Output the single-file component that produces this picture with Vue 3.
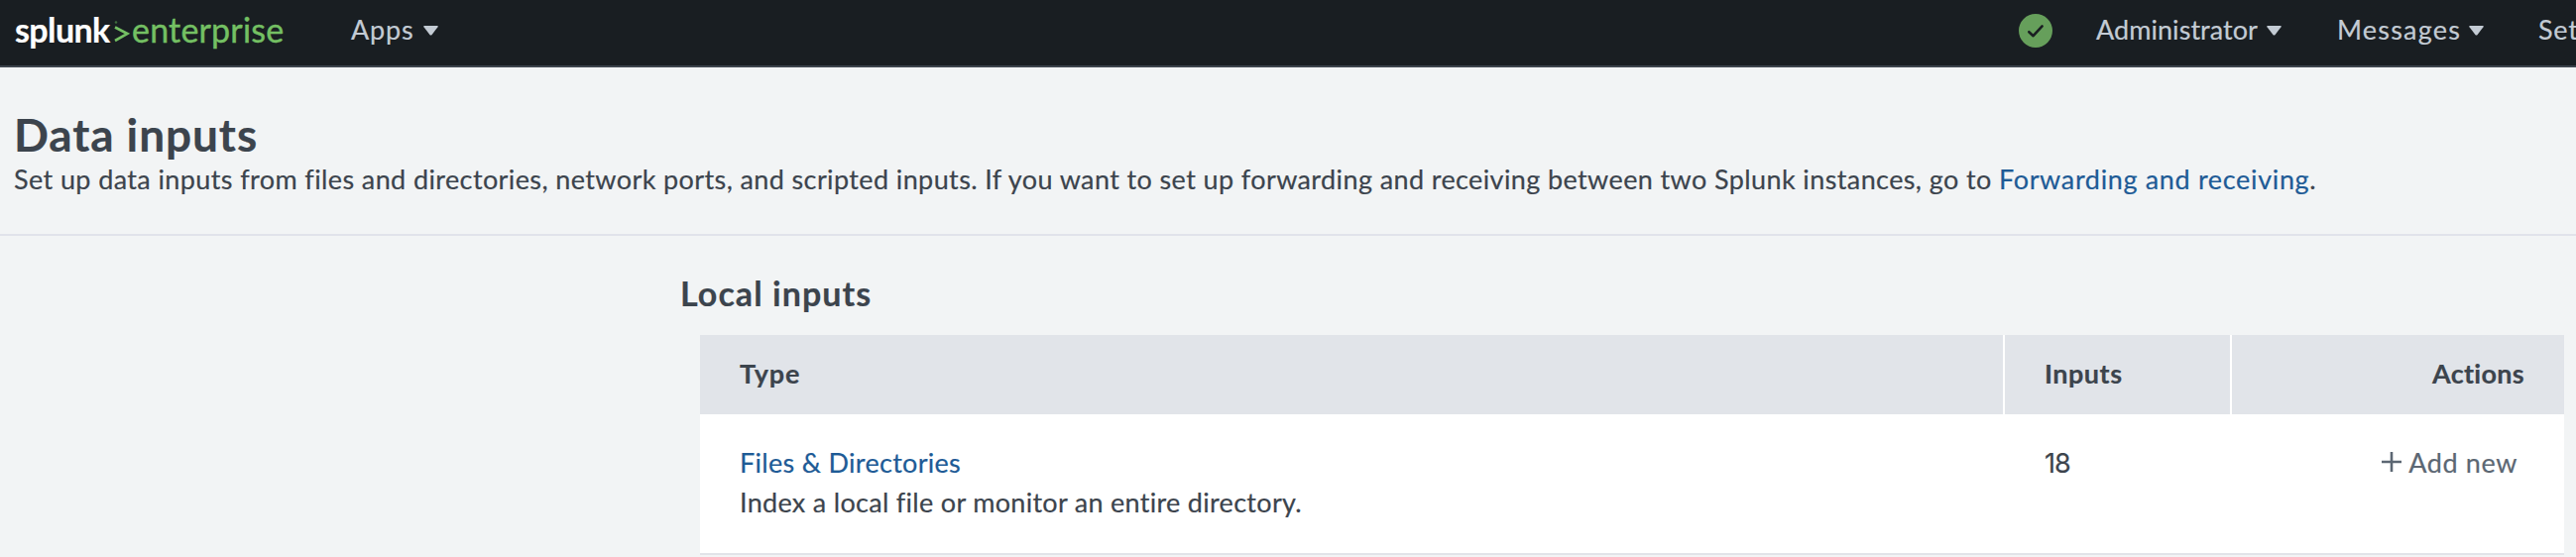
<script setup>
const menus = [
  { label: 'Administrator', cls: 'admin' },
  { label: 'Messages', cls: 'messages' },
]
const inputs = [
  { name: 'Files & Directories', text: 'Index a local file or monitor an entire directory.', count: 18 },
]
</script>

<template>
  <div class="page">
    <header class="topbar">
      <div class="logo">
        <span class="brand">splunk</span>
        <svg class="chevron" width="16" height="22" viewBox="0 0 16 22">
          <path d="M1 6.5 L13.5 13 L1 20" fill="none" stroke="#74c063" stroke-width="2.6" />
          <circle cx="2" cy="1.5" r="1.3" fill="#3d6b3c" />
        </svg>
        <span class="edition">enterprise</span>
      </div>
      <a class="menu apps">
        <span>Apps</span>
        <svg class="caret" width="15" height="10" viewBox="0 0 15 10"><path d="M1 0H14Q15.3 .1 14.5 1.3L8.6 8.9Q7.5 10.2 6.4 8.9L.5 1.3Q-.3 .1 1 0Z" /></svg>
      </a>
      <svg class="health" width="34" height="34" viewBox="0 0 34 34">
        <circle cx="17" cy="17" r="17" fill="#669f5b" />
        <path d="M10.3 18.2 L14.6 22.2 L23.6 12.4" fill="none" stroke="#1a1e22" stroke-width="2.6" stroke-linecap="round" stroke-linejoin="round" />
      </svg>
      <a v-for="m in menus" :key="m.label" class="menu" :class="m.cls">
        <span>{{ m.label }}</span>
        <svg class="caret" width="15" height="10" viewBox="0 0 15 10"><path d="M1 0H14Q15.3 .1 14.5 1.3L8.6 8.9Q7.5 10.2 6.4 8.9L.5 1.3Q-.3 .1 1 0Z" /></svg>
      </a>
      <a class="menu settings"><span>Settings</span></a>
    </header>

    <section class="heading">
      <h1>Data inputs</h1>
      <p>Set up data inputs from files and directories, network ports, and scripted inputs. If you want to set up forwarding and receiving between two Splunk instances, go to <span class="tail"><a>Forwarding and receiving</a>.</span></p>
    </section>

    <main class="content">
      <h2>Local inputs</h2>
      <div class="table">
        <div class="row head">
          <div class="cell type">Type</div>
          <div class="cell num">Inputs</div>
          <div class="cell act">Actions</div>
        </div>
        <div v-for="r in inputs" :key="r.name" class="row item">
          <div class="cell">
            <a>{{ r.name }}</a>
            <div class="desc">{{ r.text }}</div>
          </div>
          <div class="cell count">{{ r.count }}</div>
          <div class="cell add">
            <svg width="20" height="20" viewBox="0 0 20 20"><path d="M10 0V20M0 10H20" stroke="#5c6773" stroke-width="2.6" /></svg>
            <span>Add new</span>
          </div>
        </div>
      </div>
    </main>
  </div>
</template>

<style scoped>
.page {
  width: 100%;
  height: 562px;
  overflow: hidden;
  background: #f2f4f5;
  color: #3c444d;
  font: 27px/40px Lato, "Liberation Sans", sans-serif;
  -webkit-text-stroke: 0.2px currentColor;
}
.topbar {
  display: flex;
  box-sizing: border-box;
  height: 68px;
  overflow: hidden;
  background: #191e22;
  border-bottom: 2px solid #3c444d;
  color: #c3cbd4;
  white-space: nowrap;
}
.logo {
  display: flex;
  flex: none;
  width: 339px;
  height: 60px;
  padding-left: 15px;
  font-size: 34px;
  line-height: 60px;
}
.brand { width: 100px; color: #fff; font-weight: 700; letter-spacing: -0.6px; }
.chevron { flex: none; width: 16px; margin-top: 21px; }
.edition { margin-left: 2px; color: #74c063; letter-spacing: 0.2px; -webkit-text-stroke-width: 0.4px; }
.menu { display: flex; flex: none; height: 40px; margin-top: 10px; }
.menu span { letter-spacing: 0.8px; }
.caret { flex: none; margin: 16px 0 0 auto; fill: #c3cbd4; stroke: none; }
.apps { width: 88px; }
.health { flex: none; margin: 14px 44px 0 1594px; }
.admin { width: 187px; }
.admin span { letter-spacing: 0.05px; }
.messages { width: 148px; margin-left: 56px; }
.messages span { letter-spacing: 1.2px; }
.settings { margin-left: 55px; }
.heading {
  box-sizing: border-box;
  height: 170px;
  padding: 42px 0 0 14px;
  border-bottom: 2px solid #e1e3ea;
}
h1, h2, p { margin: 0; }
h1 { font-size: 46px; line-height: 52px; font-weight: 700; letter-spacing: 0.9px; }
p { margin-top: -1px; letter-spacing: 0.39px; white-space: nowrap; }
.tail { letter-spacing: 0.66px; }
a { color: #1e5b96; }
.menu { color: inherit; }
.content { padding: 38px 12px 0 686px; }
h2 { height: 62px; font-size: 34px; line-height: 40px; font-weight: 700; letter-spacing: 1.05px; }
.table { margin-left: 20px; }
.row { display: grid; grid-template-columns: 1316px 229px 335px; }
.cell { padding: 0 40px; }
.head { height: 80px; background: #e1e4e9; line-height: 78px; font-weight: 700; }
.head .cell + .cell { box-shadow: -2px 0 #fff; }
.head .cell { height: 80px; }
.type { letter-spacing: 0.8px; }
.num { letter-spacing: 0.5px; }
.act { text-align: right; letter-spacing: 0.3px; }
.item { height: 140px; background: #fff; border-bottom: 2px solid #e1e3e8; }
.item .cell { padding-top: 29px; letter-spacing: 0.3px; }
.item .count { padding-top: 30px; font-family: Inter, "Liberation Sans", sans-serif; letter-spacing: -1px; }
.item .add { display: flex; justify-content: flex-end; padding-right: 47px; color: #5c6773; letter-spacing: 0.6px; }
.add svg { margin: 9px 7px 0 0; }
</style>

<style>
body { background: #fff; }
</style>
